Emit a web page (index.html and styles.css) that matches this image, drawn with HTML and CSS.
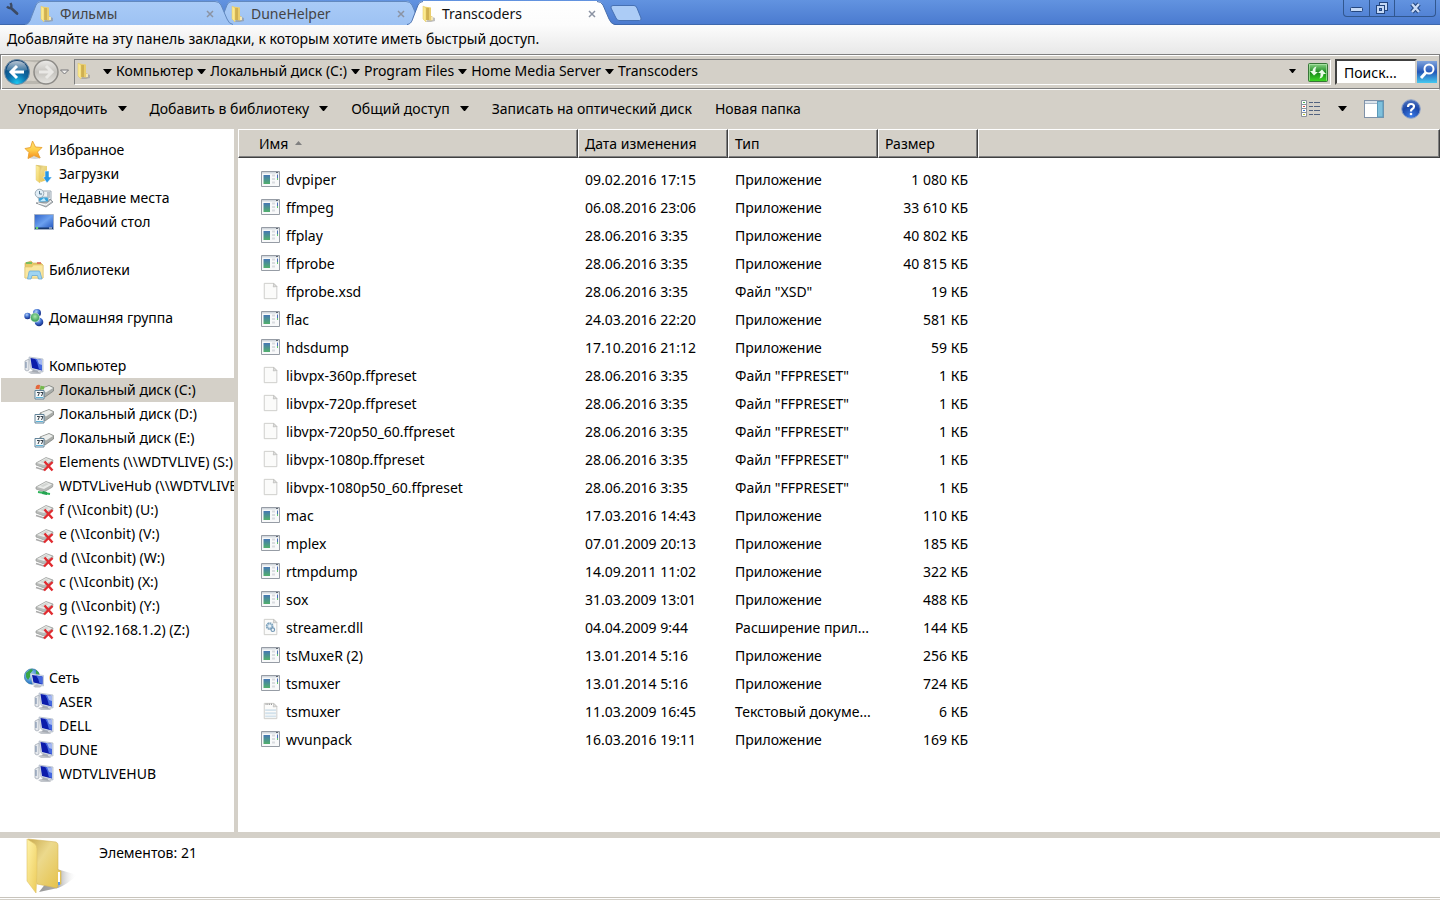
FILE: index.html
```html
<!DOCTYPE html>
<html lang="ru">
<head>
<meta charset="utf-8">
<title>Transcoders</title>
<link rel="stylesheet" href="styles.css">
</head>
<body>
<svg class="defs" aria-hidden="true">
  <defs>
    <linearGradient id="g-tab" x1="0" y1="0" x2="0" y2="1"><stop offset="0" stop-color="#a9cbf7"/><stop offset="1" stop-color="#9dc2f3"/></linearGradient>
    <linearGradient id="g-tab-on" x1="0" y1="0" x2="0" y2="1"><stop offset="0" stop-color="#fff"/><stop offset="1" stop-color="#fcfcfc"/></linearGradient>
    <linearGradient id="g-fold-l" x1="0" y1="0" x2="1" y2="1"><stop offset="0" stop-color="#fff3a8"/><stop offset="1" stop-color="#eccb5a"/></linearGradient>
    <linearGradient id="g-fold-r" x1="0" y1="0" x2="1" y2="1"><stop offset="0" stop-color="#c9ab50"/><stop offset=".4" stop-color="#ecd98c"/><stop offset="1" stop-color="#e5c045"/></linearGradient>
    <linearGradient id="g-shadow" x1="0" y1="0" x2="1" y2="0"><stop offset="0" stop-color="#555"/><stop offset=".5" stop-color="#777"/><stop offset="1" stop-color="#fff" stop-opacity="0"/></linearGradient>
    <radialGradient id="g-back" cx=".5" cy=".95" r=".9"><stop offset="0" stop-color="#19c8f2"/><stop offset=".45" stop-color="#0d6ba6"/><stop offset="1" stop-color="#123f6e"/></radialGradient>
    <linearGradient id="g-gloss" x1="0" y1="0" x2="0" y2="1"><stop offset="0" stop-color="#fff" stop-opacity=".7"/><stop offset="1" stop-color="#fff" stop-opacity=".1"/></linearGradient>
    <linearGradient id="g-fwd" x1="0" y1="0" x2="0" y2="1"><stop offset="0" stop-color="#ecebe8"/><stop offset=".5" stop-color="#c5c3be"/><stop offset="1" stop-color="#e6e5e1"/></linearGradient>
    <linearGradient id="g-green" x1="0" y1="0" x2="0" y2="1"><stop offset="0" stop-color="#8fd68a"/><stop offset=".5" stop-color="#17871a"/><stop offset="1" stop-color="#3fdb25"/></linearGradient>
    <linearGradient id="g-find" x1="0" y1="0" x2="0" y2="1"><stop offset="0" stop-color="#7fa3dc"/><stop offset=".5" stop-color="#2457b8"/><stop offset="1" stop-color="#45c9f0"/></linearGradient>
    <radialGradient id="g-help" cx=".5" cy=".9" r=".9"><stop offset="0" stop-color="#3a7be8"/><stop offset=".6" stop-color="#1c48a8"/><stop offset="1" stop-color="#5478c0"/></radialGradient>
    <linearGradient id="g-star" x1="0" y1="0" x2="0" y2="1"><stop offset="0" stop-color="#ffe27a"/><stop offset=".5" stop-color="#ffd04a"/><stop offset="1" stop-color="#f58a1c"/></linearGradient>
    <linearGradient id="g-screen" x1="0" y1="0" x2="1" y2="1"><stop offset="0" stop-color="#2f62c8"/><stop offset=".5" stop-color="#6ba0ef"/><stop offset="1" stop-color="#1d4fb8"/></linearGradient>
    <linearGradient id="g-app" x1="0" y1="0" x2="0" y2="1"><stop offset="0" stop-color="#4577b4"/><stop offset="1" stop-color="#52b06c"/></linearGradient>
    <radialGradient id="g-ballb" cx=".4" cy=".3" r=".7"><stop offset="0" stop-color="#b8d4f6"/><stop offset=".5" stop-color="#3f6fd0"/><stop offset="1" stop-color="#152a80"/></radialGradient>
    <radialGradient id="g-ballg" cx=".5" cy=".4" r=".6"><stop offset="0" stop-color="#a8e8a8"/><stop offset="1" stop-color="#25904a"/></radialGradient>
    <radialGradient id="g-globe" cx=".4" cy=".4" r=".6"><stop offset="0" stop-color="#b4e2f8"/><stop offset="1" stop-color="#1c6cc4"/></radialGradient>
  </defs>
  <symbol id="tab" viewBox="0 0 208 25"><path d="M0 25C4 24 5 21 6 18L11 5Q12.500 1 16 1H190Q194 1 196 5L202 19Q204 24 208 25Z" fill="url(#g-tab)"/><path d="M0 24.500C4 24 5 21 6 18L11 5Q12.500 1.500 16 1.500H190Q194 1.500 196 5L202 19Q204 24 208 24.500" fill="none" stroke="#6289bf"/></symbol>
  <symbol id="tab-on" viewBox="0 0 208 25"><path d="M0 25C4 24 5 21 6 18L11 5Q12.500 1 16 1H190Q194 1 196 5L202 19Q204 24 208 25Z" fill="url(#g-tab-on)"/><path d="M0 24.500C4 24 5 21 6 18L11 5Q12.500 1.500 16 1.500M190 1.500Q194 1.500 196 5L202 19Q204 24 208 24.500" fill="none" stroke="#4a70ae"/></symbol>
  <symbol id="folder" viewBox="0 0 52 56">
    <path d="M32 31L52 37Q43 46 33 50L14 54Z" fill="url(#g-shadow)" opacity=".6"/>
    <path d="M3 1L31 4Q33 5 33 7V32L36 33V46L33 47L32 50L12 46Z" fill="url(#g-fold-r)" stroke="#d5b65b" stroke-width=".6"/>
    <path d="M33 34H35V47H33Z" fill="#fff"/><path d="M33 44H35V47H33Z" fill="#5b9bea"/>
    <path d="M2 1L10 6Q12 8 12 11V34L11 55L2 43Z" fill="url(#g-fold-l)" stroke="#dfc468" stroke-width=".6"/>
  </symbol>
  <symbol id="folder-s" viewBox="0 0 16 18">
    <path d="M9 11L14 13V16L10 17H5Z" fill="#8c8c8c" opacity=".55"/>
    <path d="M3 1.500L10 2.500V11L12 12V15L10 15.500L5 15Z" fill="#e9cd6c"/>
    <path d="M5 3L8 3V15H5Z" fill="#c5a548" opacity=".75"/>
    <path d="M10.500 12H11.500V15H10.500Z" fill="#fff"/>
    <path d="M2 1L5 3V17L2 14Z" fill="#fbe98f" stroke="#e2c65f" stroke-width=".5"/>
  </symbol>
  <symbol id="down" viewBox="0 0 9 5"><path d="M0 0H9L5 5H4Z"/></symbol>
  <symbol id="close" viewBox="0 0 8 8"><path d="M1 1L7 7M7 1L1 7" stroke="#8b93a3" stroke-width="1.500"/></symbol>
  <symbol id="star" viewBox="0 0 20 20"><ellipse cx="11" cy="17.500" rx="6" ry="1.500" fill="#bbb" opacity=".6"/><path d="M8.500 1L11.500 7L18 7.500L13.500 12L16 18L10 15.500L4 18.500L5 12.500L1 8.500L6.500 7.500Z" fill="url(#g-star)" stroke="#e8a030" stroke-width=".9"/></symbol>
  <symbol id="downloads" viewBox="0 0 20 20"><path d="M2 1L13 2V16L7 18L4 16Z" fill="url(#g-fold-r)"/><path d="M2 1L6 3V19L2 16Z" fill="url(#g-fold-l)" stroke="#d9bf68" stroke-width=".4"/><path d="M11 7H15V13H18L13 19L9 13H11Z" fill="#2696e4" stroke="#fff" stroke-width=".5"/></symbol>
  <symbol id="recent" viewBox="0 0 20 20"><path d="M7 3H17V12H7Z" fill="#eef2f5" stroke="#9daab5"/><path d="M13 5H16M13 7H16M13 9H16" stroke="#8593a0"/><path d="M4 9L14 9L15 14L5 14Z" fill="#35a2dc" stroke="#b6c4cd"/><path d="M6 13L10 10L12 13Z" fill="#bfe8fb"/><path d="M2 15L12 19L19 14L16 11L14 14Z" fill="#c3c7ca" stroke="#7e868c" stroke-width=".8"/><path d="M4 15L12 17L17 13" fill="none" stroke="#fff"/><circle cx="5.500" cy="5.500" r="4.300" fill="#e1eef7" stroke="#9aaab6"/><path d="M5.500 3V6H8" fill="none" stroke="#58788f"/></symbol>
  <symbol id="desktop" viewBox="0 0 20 20"><path d="M.5 2.500H19.500V17.500H.5Z" fill="url(#g-screen)" stroke="#a2b0c6"/><path d="M1 15.500H19V17H1Z" fill="#17386c"/><circle cx="3" cy="16" r="1.300" fill="#69d46c"/><path d="M15 16H18" stroke="#d6e2f3"/></symbol>
  <symbol id="libs" viewBox="0 0 20 20"><path d="M1 3L7 1L9 3H17L19 5V18H1Z" fill="#e8c968" stroke="#cfae51" stroke-width=".6"/><path d="M2 3H8" stroke="#59b85b" stroke-width="1.500"/><path d="M13 3H17" stroke="#dc6257" stroke-width="1.500"/><path d="M1 7H8L9 5H19V18H1Z" fill="#fae7a0" stroke="#dfc36a" stroke-width=".6"/><path d="M3.500 19L5 12Q5 11 6 11H15Q16 11 16 12L18 19H14.500L13.500 15.500H8L7 19Z" fill="#9fd4f2" stroke="#69aad5" stroke-width=".8"/></symbol>
  <symbol id="home" viewBox="0 0 20 20"><circle cx="13" cy="5" r="4" fill="url(#g-ballb)"/><circle cx="3.500" cy="8" r="3.200" fill="url(#g-ballb)"/><circle cx="15" cy="14" r="4.300" fill="url(#g-ballb)"/><circle cx="11" cy="9.500" r="4.600" fill="url(#g-ballg)" stroke="#eefbf0" stroke-width=".6"/></symbol>
  <symbol id="pc" viewBox="0 0 20 20"><path d="M1 5L5 3V14L3 15L1 14Z" fill="#e5e8ed" stroke="#9ba3af" stroke-width=".7"/><path d="M2 6V12" stroke="#7186a6"/><path d="M4 16L9 14.500L18 16.500L16 18H7Z" fill="#c2c6cc"/><path d="M9 13L13 14L15 17L8 16Z" fill="#a6abb3"/><path d="M5 1L19 3V16L7 13Z" fill="#dce2ec" stroke="#a8b1c1" stroke-width=".7"/><path d="M6.500 2L18 4V14.500L8 12Z" fill="#0c1cab"/><path d="M11 2.800L18 4V14L15 13.300Q14 7 11 2.800Z" fill="#4468e0"/><path d="M13 3L18 4V9L15 8Z" fill="#b3c6f6" opacity=".85"/></symbol>
  <symbol id="net" viewBox="0 0 20 20"><circle cx="8" cy="8.500" r="7.700" fill="url(#g-globe)" stroke="#387b9c" stroke-width=".6"/><path d="M2 5L7 1L9 2L6 6L6 9L4 12L2 9ZM12 2L15 5V7H12Z" fill="#38a545"/><path d="M6.500 5.500L19.500 7.500V18L8.500 15.500Z" fill="#dce4f0" stroke="#a5b3c8" stroke-width=".6"/><path d="M8 7L18.500 8.500V16.500L9.500 14.500Z" fill="#0c1cab"/><path d="M12 7.500L18.500 8.500V16L15.500 15.300Q15 11 12 7.500Z" fill="#4468e0"/><path d="M9 18L12 16.500L18 18L16 19.500H11Z" fill="#bcc1c8"/></symbol>
  <symbol id="drive-body" viewBox="0 0 20 20"><path d="M2 11L12 5.500L19 8L18.500 11L10 16L2 13Z" fill="#b8bab8" stroke="#969996" stroke-width=".7"/><path d="M3 11L12 6L18 8.500L10 13Z" fill="#e9ebe9"/><path d="M6 10L12 7L15 8L9 11Z" fill="#d2d5d2"/></symbol>
  <symbol id="disk" viewBox="0 0 20 20"><path d="M6 9L15 5.500L19.500 7.500V11L11 17L6 14Z" fill="#a9aca9" stroke="#777b77" stroke-width=".7"/><path d="M7 9L15 6L19 8L12 12.500Z" fill="#eceeec"/><path d="M1 10.500H10V19H1Z" fill="#f7f8f8" stroke="#63849a"/><path d="M3 12.500H5.500L4 16M6.500 12.500H9L7.500 16" fill="none" stroke="#34404a"/><path d="M2 17.500H9" stroke="#5db3d8"/></symbol>
  <symbol id="disk-c" viewBox="0 0 20 20"><use href="#disk"/><path d="M2 6Q4 4 6 5L5.500 9H1.500Z" fill="#e5663a"/><path d="M6.500 5.500Q8.500 6.500 10.500 6L10 9.500H6Z" fill="#73b84b"/></symbol>
  <symbol id="net-off" viewBox="0 0 20 20"><use href="#drive-body"/><path d="M2 15.500L10 18" stroke="#aaa" stroke-width="1.500"/><path d="M10.500 9.500L18.500 18.500M18.500 10L10 18.500" stroke="#e02b30" stroke-width="2.400"/></symbol>
  <symbol id="net-on" viewBox="0 0 20 20"><use href="#drive-body"/><path d="M4 16L16 18" stroke="#2fb65a" stroke-width="1.800"/><path d="M9 15L13 16V19L8 18Z" fill="#25a352"/></symbol>
  <symbol id="app" viewBox="0 0 20 16"><path d="M.5 .5H18.500V15.500H.5Z" fill="#f8f9fa" stroke="#969ca5"/><path d="M1 1H18V2.500H1Z" fill="#d3d8de"/><path d="M15 1.500H17" stroke="#5f6873"/><path d="M2.500 4H9V13H2.500Z" fill="url(#g-app)"/><path d="M11 4.500H14M11 8H14M11 11.500H14" stroke="#d9dce0" stroke-width="2"/><path d="M16.500 3.500V9" stroke="#4b6fb9" stroke-width="1"/><path d="M16.500 7V9" stroke="#5fc46e" stroke-width="1"/></symbol>
  <symbol id="file" viewBox="0 0 20 20"><path d="M2.500 1.500H13L16.500 5V18.500H2.500Z" fill="#fbfbfa" stroke="#c9c9c7"/><path d="M13 1.500L12.500 5.500L16.500 5Z" fill="#dededc" stroke="#b4b4b2" stroke-width=".7"/></symbol>
  <symbol id="dll" viewBox="0 0 20 20"><use href="#file"/><circle cx="8.500" cy="9" r="3.300" fill="#eaf2f8" stroke="#7fa3bd" stroke-width="2" stroke-dasharray="2 .5"/><circle cx="8.500" cy="9" r="2.200" fill="none" stroke="#9fbdd2"/><circle cx="12" cy="13" r="2" fill="#eaf2f8" stroke="#7196b4" stroke-width="1.300"/></symbol>
  <symbol id="txt" viewBox="0 0 20 20"><use href="#file"/><path d="M4 2.500H12" stroke="#929292" stroke-width="1.500" stroke-dasharray="1 1"/><path d="M3.500 9H15.500M3.500 12.500H15.500M3.500 16H15.500" stroke="#d3e2ec" stroke-width="2"/></symbol>
</svg>

<header class="titlebar">
  <button class="wrench" type="button" aria-label="Настройки"><svg width="14" height="14" viewBox="0 0 14 14"><path d="M2 4.500Q4 7 6 5.500Q7 4 5.500 1" fill="none" stroke="#3c4a63" stroke-width="2.400"/><path d="M6 6L12 11.500" stroke="#3c4a63" stroke-width="2.800" stroke-linecap="round"/></svg></button>
  <div class="tabs">
    <div class="tab first"><svg class="tab-bg"><use href="#tab"/></svg><svg class="ico16"><use href="#folder-s"/></svg><span>Фильмы</span><button type="button" aria-label="Закрыть"><svg width="8" height="8"><use href="#close"/></svg></button></div>
    <div class="tab"><svg class="tab-bg"><use href="#tab"/></svg><svg class="ico16"><use href="#folder-s"/></svg><span>DuneHelper</span><button type="button" aria-label="Закрыть"><svg width="8" height="8"><use href="#close"/></svg></button></div>
    <div class="tab on"><svg class="tab-bg"><use href="#tab-on"/></svg><svg class="ico16"><use href="#folder-s"/></svg><span>Transcoders</span><button type="button" aria-label="Закрыть"><svg width="8" height="8"><use href="#close"/></svg></button></div>
  </div>
  <button class="newtab" type="button" aria-label="Новая вкладка"><svg width="32" height="16" viewBox="0 0 32 16"><path d="M3 .5H24Q26 .5 27 3L31 13Q31.500 15.500 29.500 15.500H9Q7 15.500 6 13L1 3Q.5 .5 3 .5Z" fill="#acccf6" stroke="#4670b3"/></svg></button>
  <div class="winctl">
    <button class="wmin" type="button" aria-label="Свернуть"><svg width="13" height="6" viewBox="0 0 13 6"><rect x=".5" y=".5" width="12" height="4" rx="1" fill="#c5d9f6" stroke="#24467e"/></svg></button>
    <button class="wmax" type="button" aria-label="Свернуть в окно"><svg width="14" height="14" viewBox="0 0 14 14"><rect x="4.500" y="1.500" width="8" height="8" fill="#c5d9f6" stroke="#24467e"/><rect x="1.500" y="4.500" width="8" height="8" fill="#c5d9f6" stroke="#24467e"/><rect x="4.500" y="7.500" width="2" height="2" fill="#5a8bdc" stroke="#24467e"/></svg></button>
    <button class="wclose" type="button" aria-label="Закрыть окно"><svg width="13" height="12" viewBox="0 0 13 12"><path d="M3 2L10 10M10 2L3 10" stroke="#24467e" stroke-width="4.400"/><path d="M3 2L10 10M10 2L3 10" stroke="#cbdcf6" stroke-width="2.400"/></svg></button>
  </div>
</header>

<p class="bookmarks">Добавляйте на эту панель закладки, к которым хотите иметь быстрый доступ.</p>

<div class="address">
  <div class="history">
    <svg class="nav-ico" width="70" height="28" viewBox="0 0 70 28" role="img" aria-label="Назад и вперёд"><path d="M12 2H42Q34 5 29 4Q22 3 12 2M12 26Q24 22 29 23Q36 22 42 26Z" fill="#bab7af"/><circle cx="13" cy="14" r="12.500" fill="url(#g-back)" stroke="#6f8ba3"/><path d="M2.500 12Q4 3 13 3T23.500 12Q13 16 2.500 12Z" fill="url(#g-gloss)"/><path d="M13 8L7 14L13 20M7.500 14H20" fill="none" stroke="#fff" stroke-width="3"/><circle cx="42" cy="14" r="12" fill="url(#g-fwd)" stroke="#8d8b87" stroke-width="1.500"/><path d="M42 8L48 14L42 20M47.500 14H35" fill="none" stroke="#e9e8e5" stroke-width="3"/><path d="M56.500 12H64.500L60.500 16Z" fill="#f0efec" stroke="#77777b"/></svg>
  </div>
  <nav class="crumbs" aria-label="Путь">
    <svg class="ico16 wide"><use href="#folder-s"/></svg>
    <svg class="dn"><use href="#down"/></svg><a href="#">Компьютер</a>
    <svg class="dn"><use href="#down"/></svg><a href="#">Локальный диск (C:)</a>
    <svg class="dn"><use href="#down"/></svg><a href="#">Program Files</a>
    <svg class="dn"><use href="#down"/></svg><a href="#">Home Media Server</a>
    <svg class="dn"><use href="#down"/></svg><a href="#">Transcoders</a>
    <button class="drop" type="button" aria-label="Предыдущие адреса"><svg width="7" height="4"><use href="#down"/></svg></button>
    <button class="refresh" type="button" aria-label="Обновить"><svg width="20" height="19" viewBox="0 0 20 19"><rect x=".5" y=".5" width="19" height="18" rx="1" fill="url(#g-green)" stroke="#387638"/><path d="M1.500 17.500V1.500H18.500V17.500" fill="none" stroke="#b5e8ae" stroke-opacity=".7"/><path d="M8.500 3.500Q5 4 4.500 8H2L6 12.500L10 9H7.500Q7 6 8.500 3.500ZM11.500 15.500Q15 15 15.500 11H18L14 6.500L10 10H12.500Q13 13 11.500 15.500Z" fill="#eafbe8"/></svg></button>
  </nav>
  <input class="search" type="text" value="Поиск..." aria-label="Поиск">
  <button class="find" type="button" aria-label="Найти"><svg width="20" height="22" viewBox="0 0 20 22"><rect width="20" height="22" fill="url(#g-find)"/><circle cx="12" cy="8" r="4.500" fill="none" stroke="#fff" stroke-width="2"/><path d="M9 11.500L4 17" stroke="#fff" stroke-width="3"/></svg></button>
</div>

<div class="toolbar">
  <button type="button">Упорядочить<svg class="dn"><use href="#down"/></svg></button>
  <button type="button">Добавить в библиотеку<svg class="dn"><use href="#down"/></svg></button>
  <button type="button">Общий доступ<svg class="dn"><use href="#down"/></svg></button>
  <button type="button">Записать на оптический диск</button>
  <button type="button">Новая папка</button>
  <div class="views">
    <button type="button" aria-label="Вид"><svg width="20" height="17" viewBox="0 0 20 17"><path d="M.5 .5H5.500V16.500H.5ZM.5 4.500H5.500M.5 8.500H5.500M.5 12.500H5.500" fill="#fff" stroke="#8a929d"/><path d="M2 2.500H4" stroke="#4dac55"/><path d="M2 6.500H4" stroke="#d44b43"/><path d="M2 10.500H4" stroke="#3a79d0"/><path d="M2 14.500H4" stroke="#b9c537"/><path d="M8 2.500H12M13 2.500H19M8 6.500H12M13 6.500H19M8 10.500H12M13 10.500H19M8 14.500H12M13 14.500H19" stroke="#53637f"/></svg></button>
    <button type="button" aria-label="Другие виды"><svg class="dn"><use href="#down"/></svg></button>
    <button type="button" aria-label="Область просмотра"><svg width="20" height="18" viewBox="0 0 20 18"><rect x=".5" y=".5" width="19" height="17" fill="#fff" stroke="#7f91a8"/><path d="M1 2H19" stroke="#dce4ec" stroke-width="2"/><path d="M1 3.500H14" stroke="#a8b8ca"/><rect x="13.500" y="1.500" width="5.500" height="15.500" fill="#7fc0dc" stroke="#5b99b9"/></svg></button>
    <button type="button" aria-label="Справка"><svg width="20" height="20" viewBox="0 0 20 20"><circle cx="10" cy="10" r="9.300" fill="url(#g-help)" stroke="#8fa3c9"/><path d="M7 8Q7 5 10 5T13 7.500Q13 9 11 10.200Q10 11 10 12.500" fill="none" stroke="#fff" stroke-width="2.200"/><circle cx="10" cy="15" r="1.300" fill="#fff"/></svg></button>
  </div>
</div>

<div class="body">
  <nav class="side" aria-label="Переходы">
    <ul>
      <li class="top"><a href="#"><svg><use href="#star"/></svg>Избранное</a></li>
      <li><a href="#"><svg><use href="#downloads"/></svg>Загрузки</a></li>
      <li><a href="#"><svg><use href="#recent"/></svg>Недавние места</a></li>
      <li><a href="#"><svg><use href="#desktop"/></svg>Рабочий стол</a></li>
    </ul>
    <ul><li class="top"><a href="#"><svg><use href="#libs"/></svg>Библиотеки</a></li></ul>
    <ul><li class="top"><a href="#"><svg><use href="#home"/></svg>Домашняя группа</a></li></ul>
    <ul>
      <li class="top"><a href="#"><svg><use href="#pc"/></svg>Компьютер</a></li>
      <li class="sel"><a href="#"><svg><use href="#disk-c"/></svg>Локальный диск (C:)</a></li>
      <li><a href="#"><svg><use href="#disk"/></svg>Локальный диск (D:)</a></li>
      <li><a href="#"><svg><use href="#disk"/></svg>Локальный диск (E:)</a></li>
      <li><a href="#"><svg><use href="#net-off"/></svg>Elements (\\WDTVLIVE) (S:)</a></li>
      <li><a href="#"><svg><use href="#net-on"/></svg>WDTVLiveHub (\\WDTVLIVE</a></li>
      <li><a href="#"><svg><use href="#net-off"/></svg>f (\\Iconbit) (U:)</a></li>
      <li><a href="#"><svg><use href="#net-off"/></svg>e (\\Iconbit) (V:)</a></li>
      <li><a href="#"><svg><use href="#net-off"/></svg>d (\\Iconbit) (W:)</a></li>
      <li><a href="#"><svg><use href="#net-off"/></svg>c (\\Iconbit) (X:)</a></li>
      <li><a href="#"><svg><use href="#net-off"/></svg>g (\\Iconbit) (Y:)</a></li>
      <li><a href="#"><svg><use href="#net-off"/></svg>C (\\192.168.1.2) (Z:)</a></li>
    </ul>
    <ul>
      <li class="top"><a href="#"><svg><use href="#net"/></svg>Сеть</a></li>
      <li><a href="#"><svg><use href="#pc"/></svg>ASER</a></li>
      <li><a href="#"><svg><use href="#pc"/></svg>DELL</a></li>
      <li><a href="#"><svg><use href="#pc"/></svg>DUNE</a></li>
      <li><a href="#"><svg><use href="#pc"/></svg>WDTVLIVEHUB</a></li>
    </ul>
  </nav>
  <main class="files">
    <table>
      <colgroup><col class="c-name"><col class="c-mid"><col class="c-mid"><col class="c-size"><col></colgroup>
      <thead><tr><th scope="col" class="name">Имя<svg class="sort" width="7" height="4" viewBox="0 0 7 4"><path d="M0 4L3.500 0L7 4Z" fill="#808080"/></svg></th><th scope="col">Дата изменения</th><th scope="col">Тип</th><th scope="col">Размер</th><td></td></tr></thead>
      <tbody>
        <tr><td><svg><use href="#app"/></svg>dvpiper</td><td>09.02.2016 17:15</td><td>Приложение</td><td>1 080 КБ</td><td></td></tr>
        <tr><td><svg><use href="#app"/></svg>ffmpeg</td><td>06.08.2016 23:06</td><td>Приложение</td><td>33 610 КБ</td><td></td></tr>
        <tr><td><svg><use href="#app"/></svg>ffplay</td><td>28.06.2016 3:35</td><td>Приложение</td><td>40 802 КБ</td><td></td></tr>
        <tr><td><svg><use href="#app"/></svg>ffprobe</td><td>28.06.2016 3:35</td><td>Приложение</td><td>40 815 КБ</td><td></td></tr>
        <tr><td><svg><use href="#file"/></svg>ffprobe.xsd</td><td>28.06.2016 3:35</td><td>Файл "XSD"</td><td>19 КБ</td><td></td></tr>
        <tr><td><svg><use href="#app"/></svg>flac</td><td>24.03.2016 22:20</td><td>Приложение</td><td>581 КБ</td><td></td></tr>
        <tr><td><svg><use href="#app"/></svg>hdsdump</td><td>17.10.2016 21:12</td><td>Приложение</td><td>59 КБ</td><td></td></tr>
        <tr><td><svg><use href="#file"/></svg>libvpx-360p.ffpreset</td><td>28.06.2016 3:35</td><td>Файл "FFPRESET"</td><td>1 КБ</td><td></td></tr>
        <tr><td><svg><use href="#file"/></svg>libvpx-720p.ffpreset</td><td>28.06.2016 3:35</td><td>Файл "FFPRESET"</td><td>1 КБ</td><td></td></tr>
        <tr><td><svg><use href="#file"/></svg>libvpx-720p50_60.ffpreset</td><td>28.06.2016 3:35</td><td>Файл "FFPRESET"</td><td>1 КБ</td><td></td></tr>
        <tr><td><svg><use href="#file"/></svg>libvpx-1080p.ffpreset</td><td>28.06.2016 3:35</td><td>Файл "FFPRESET"</td><td>1 КБ</td><td></td></tr>
        <tr><td><svg><use href="#file"/></svg>libvpx-1080p50_60.ffpreset</td><td>28.06.2016 3:35</td><td>Файл "FFPRESET"</td><td>1 КБ</td><td></td></tr>
        <tr><td><svg><use href="#app"/></svg>mac</td><td>17.03.2016 14:43</td><td>Приложение</td><td>110 КБ</td><td></td></tr>
        <tr><td><svg><use href="#app"/></svg>mplex</td><td>07.01.2009 20:13</td><td>Приложение</td><td>185 КБ</td><td></td></tr>
        <tr><td><svg><use href="#app"/></svg>rtmpdump</td><td>14.09.2011 11:02</td><td>Приложение</td><td>322 КБ</td><td></td></tr>
        <tr><td><svg><use href="#app"/></svg>sox</td><td>31.03.2009 13:01</td><td>Приложение</td><td>488 КБ</td><td></td></tr>
        <tr><td><svg><use href="#dll"/></svg>streamer.dll</td><td>04.04.2009 9:44</td><td>Расширение прил...</td><td>144 КБ</td><td></td></tr>
        <tr><td><svg><use href="#app"/></svg>tsMuxeR (2)</td><td>13.01.2014 5:16</td><td>Приложение</td><td>256 КБ</td><td></td></tr>
        <tr><td><svg><use href="#app"/></svg>tsmuxer</td><td>13.01.2014 5:16</td><td>Приложение</td><td>724 КБ</td><td></td></tr>
        <tr><td><svg><use href="#txt"/></svg>tsmuxer</td><td>11.03.2009 16:45</td><td>Текстовый докуме...</td><td>6 КБ</td><td></td></tr>
        <tr><td><svg><use href="#app"/></svg>wvunpack</td><td>16.03.2016 19:11</td><td>Приложение</td><td>169 КБ</td><td></td></tr>
      </tbody>
    </table>
  </main>
</div>

<footer class="details"><svg class="big"><use href="#folder"/></svg><span>Элементов: 21</span></footer>
</body>
</html>
```
FILE: styles.css
```css
* { box-sizing: border-box; }
body {
  margin: 0;
  height: 100vh;
  display: flex;
  flex-direction: column;
  overflow: hidden;
  background: #d4d0c8;
  color: #000;
  font: 14px/20px "Noto Sans", sans-serif;
}
button { margin: 0; padding: 0; border: 0; background: none; color: inherit; font: inherit; }
a { color: inherit; text-decoration: none; }
svg { display: block; flex: none; }
ul { margin: 0; padding: 0; list-style: none; }
.defs { position: absolute; width: 0; height: 0; }
.ico16 { width: 16px; height: 18px; }
.dn { width: 9px; height: 5px; }

.titlebar {
  display: flex;
  flex: none;
  height: 25px;
  background: linear-gradient(#6293e0, #4a7acf);
  box-shadow: inset 0 -1px #3e68ad;
}
.wrench { width: 25px; padding: 2px 0 0 5px; display: flex; }
.tabs { display: flex; }
.tab {
  position: relative;
  z-index: 1;
  display: flex;
  align-items: center;
  width: 207px;
  height: 25px;
  margin-left: -16px;
  padding: 2px 18px 0 14px;
  color: #444;
}
.tab.first { z-index: 2; margin-left: 0; }
.tab.on { z-index: 3; color: #111; }
.tab-bg { position: absolute; inset: 0; width: 208px; height: 25px; z-index: -1; }
.tab span { flex: 1; margin-left: 5px; }
.newtab { margin: 5px 0 0 -4px; height: 16px; }
.winctl {
  display: flex;
  height: 17px;
  margin-left: auto;
  margin-right: 4px;
  border: 1px solid #31578f;
  border-top: 0;
  border-radius: 0 0 4px 4px;
}
.winctl button { width: 25px; display: flex; align-items: center; justify-content: center; }
.winctl button + button { border-left: 1px solid #31578f; }
.winctl .wmin { padding-top: 4px; }
.winctl .wclose { width: 41px; }

.bookmarks {
  flex: none;
  height: 29px;
  margin: 0;
  padding: 4px 7px;
  background: linear-gradient(#fcfcfc, #e8e8e8);
  white-space: nowrap;
}

.address {
  display: flex;
  flex: none;
  align-items: center;
  height: 36px;
  border: 1px solid #808080;
  border-bottom: 1px solid #fff;
  padding: 0 2px 0 3px;
  box-shadow: inset 1px 1px #fff, inset 0 -1px #808080;
}
.history { width: 70px; }
.crumbs {
  flex: 1;
  display: flex;
  align-items: center;
  height: 26px;
  border: 1px solid #fff;
  border-top-color: #808080;
  border-left-color: #808080;
  padding-bottom: 2px;
}
.crumbs .wide { margin: 0 7px 0 1px; }
.crumbs .dn { margin: 0 4px; }
.drop { margin-left: auto; padding: 6px; }
.refresh { margin: 2px 2px 0 6px; }
.search {
  width: 82px;
  height: 26px;
  margin: 0 0 0 4px;
  padding: 0 7px;
  border: 2px solid #d4d0c8;
  border-top-color: #404040;
  border-left-color: #404040;
  outline: 0;
  background: #fff;
  color: #000;
  font: inherit;
}

.toolbar { display: flex; flex: none; align-items: center; gap: 23px; height: 39px; padding: 0 19px 2px 18px; }
.toolbar button { display: flex; align-items: center; gap: 10px; white-space: nowrap; }
.views { display: flex; align-items: center; gap: 17px; margin-left: auto; }

.body { flex: 1; display: flex; min-height: 0; }
.side { flex: none; width: 238px; padding: 9px 0 0 1px; border-right: 4px solid #d4d0c8; background: #fff; overflow: hidden; }
.side ul { margin-bottom: 24px; }
.side a { display: flex; align-items: center; gap: 5px; height: 24px; padding-left: 33px; white-space: nowrap; }
.side .top a { padding-left: 23px; }
.side svg { width: 20px; height: 20px; }
.side .sel { background: #d4d0c8; }

.files { flex: 1; background: #fff; overflow: hidden; }
table { width: 100%; border-collapse: separate; border-spacing: 0; table-layout: fixed; }
.c-name { width: 340px; }
.c-mid { width: 150px; }
.c-size { width: 100px; }
th, td { padding: 0 0 0 7px; text-align: left; font-weight: 400; white-space: nowrap; }
thead th, thead td {
  height: 29px;
  background: #d4d0c8;
  border: 1px solid #404040;
  border-top-color: #fff;
  border-left-color: #fff;
  box-shadow: inset -1px -1px #808080;
  padding-left: 6px;
}
th.name { padding-left: 20px; }
.sort { display: inline-block; margin: 0 0 4px 7px; }
tbody::before { content: ""; display: block; height: 8px; }
tbody td { height: 28px; }
tbody td:first-child { display: flex; align-items: center; gap: 5px; padding-left: 23px; }
tbody td:nth-child(4) { padding-right: 10px; text-align: right; }
tbody svg { width: 20px; height: 18px; margin-bottom: 2px; }

.details {
  display: flex;
  flex: none;
  height: 68px;
  padding-left: 25px;
  background: #fff;
  border-top: 6px solid #d4d0c8;
  border-bottom: 1px solid #d4d0c8;
  box-shadow: inset 0 -1px #fff, inset 0 -2px #c8c4bc;
}
.big { width: 52px; height: 56px; }
.details span { margin: 5px 0 0 22px; }
```
